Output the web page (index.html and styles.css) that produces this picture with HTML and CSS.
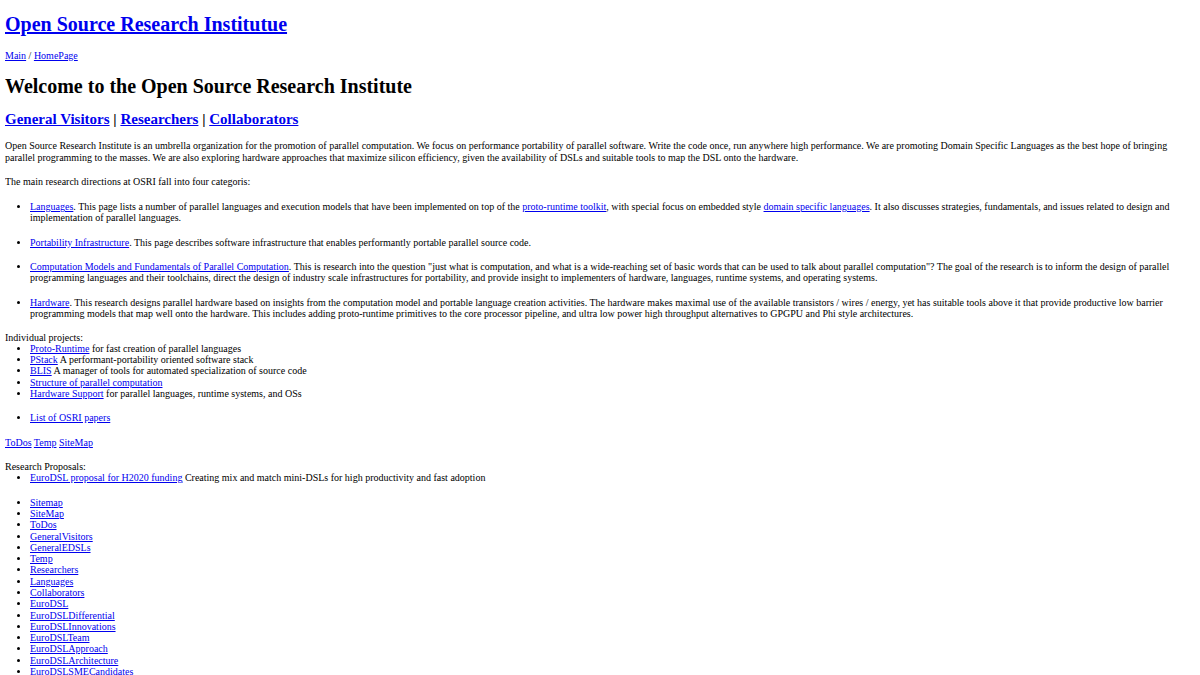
FILE: index.html
```html
<!DOCTYPE html>
<html>
<head>
<meta charset="utf-8">
<title>Open Source Research Institute</title>
<link rel="stylesheet" href="styles.css">
</head>
<body>
<h1 class="site-title"><a href="#">Open Source Research Institutue</a></h1>
<p class="crumbs"><a href="#">Main</a> / <a href="#">HomePage</a></p>
<h1 class="page-title">Welcome to the Open Source Research Institute</h1>
<h2 class="audiences"><a href="#">General Visitors</a> | <a href="#">Researchers</a> | <a href="#">Collaborators</a></h2>
<p class="block">Open Source Research Institute is an umbrella organization for the promotion of parallel computation. We focus on performance portability of parallel software. Write the code once, run anywhere high performance. We are promoting Domain Specific Languages as the best hope of bringing parallel programming to the masses. We are also exploring hardware approaches that maximize silicon efficiency, given the availability of DSLs and suitable tools to map the DSL onto the hardware.</p>
<p class="intro">The main research directions at OSRI fall into four categoris:</p>
<ul class="directions">
<li><a href="#">Languages</a>. This page lists a number of parallel languages and execution models that have been implemented on top of the <a href="#">proto-runtime toolkit</a>, with special focus on embedded style <a href="#">domain specific languages</a>. It also discusses strategies, fundamentals, and issues related to design and implementation of parallel languages.</li>
<li><a href="#">Portability Infrastructure</a>. This page describes software infrastructure that enables performantly portable parallel source code.</li>
<li><a href="#">Computation Models and Fundamentals of Parallel Computation</a>. This is research into the question "just what is computation, and what is a wide-reaching set of basic words that can be used to talk about parallel computation"? The goal of the research is to inform the design of parallel programming languages and their toolchains, direct the design of industry scale infrastructures for portability, and provide insight to implementers of hardware, languages, runtime systems, and operating systems.</li>
<li><a href="#">Hardware</a>. This research designs parallel hardware based on insights from the computation model and portable language creation activities. The hardware makes maximal use of the available transistors / wires / energy, yet has suitable tools above it that provide productive low barrier programming models that map well onto the hardware. This includes adding proto-runtime primitives to the core processor pipeline, and ultra low power high throughput alternatives to GPGPU and Phi style architectures.</li>
</ul>
<div class="group">
<div>Individual projects:</div>
<ul class="plain">
<li><a href="#">Proto-Runtime</a> for fast creation of parallel languages</li>
<li><a href="#">PStack</a> A performant-portability oriented software stack</li>
<li><a href="#">BLIS</a> A manager of tools for automated specialization of source code</li>
<li><a href="#">Structure of parallel computation</a></li>
<li><a href="#">Hardware Support</a> for parallel languages, runtime systems, and OSs</li>
</ul>
</div>
<ul class="plain block">
<li><a href="#">List of OSRI papers</a></li>
</ul>
<p class="block"><a href="#">ToDos</a> <a href="#">Temp</a> <a href="#">SiteMap</a></p>
<div class="group">
<div>Research Proposals:</div>
<ul class="plain">
<li><a href="#">EuroDSL proposal for H2020 funding</a> Creating mix and match mini-DSLs for high productivity and fast adoption</li>
</ul>
</div>
<ul class="plain block">
<li><a href="#">Sitemap</a></li>
<li><a href="#">SiteMap</a></li>
<li><a href="#">ToDos</a></li>
<li><a href="#">GeneralVisitors</a></li>
<li><a href="#">GeneralEDSLs</a></li>
<li><a href="#">Temp</a></li>
<li><a href="#">Researchers</a></li>
<li><a href="#">Languages</a></li>
<li><a href="#">Collaborators</a></li>
<li><a href="#">EuroDSL</a></li>
<li><a href="#">EuroDSLDifferential</a></li>
<li><a href="#">EuroDSLInnovations</a></li>
<li><a href="#">EuroDSLTeam</a></li>
<li><a href="#">EuroDSLApproach</a></li>
<li><a href="#">EuroDSLArchitecture</a></li>
<li><a href="#">EuroDSLSMECandidates</a></li>
</ul>
</body>
</html>
```
FILE: styles.css
```css
html {
  background: #ffffff;
}
body {
  margin: 5px;
  font-family: "Liberation Serif", "Times New Roman", serif;
  font-size: 10px;
  line-height: 11.27px;
  color: #000000;
}
a {
  color: #0000ee;
  text-decoration: underline;
}
.site-title {
  font-size: 20px;
  line-height: 23px;
  font-weight: bold;
  margin: 8px 0 14px 0;
}
.crumbs {
  margin: 0 0 13.5px 0;
}
.page-title {
  font-size: 20px;
  line-height: 23px;
  font-weight: bold;
  margin: 0 0 13px 0;
}
.audiences {
  font-size: 15px;
  line-height: 17px;
  font-weight: bold;
  margin: 0 0 12.5px 0;
}
.block {
  margin: 0 0 13px 0;
}
.intro {
  margin: 0 0 14px 0;
}
.directions {
  margin: 0 0 12.5px 0;
  padding-left: 25px;
  display: flex;
  flex-direction: column;
  gap: 13px;
}
.directions li {
  line-height: 11.3px;
}
.group {
  margin: 0 0 13.2px 0;
}
.plain {
  margin-top: 0;
  margin-bottom: 0;
  padding-left: 25px;
}
.plain.block {
  margin-bottom: 13.2px;
}
```
